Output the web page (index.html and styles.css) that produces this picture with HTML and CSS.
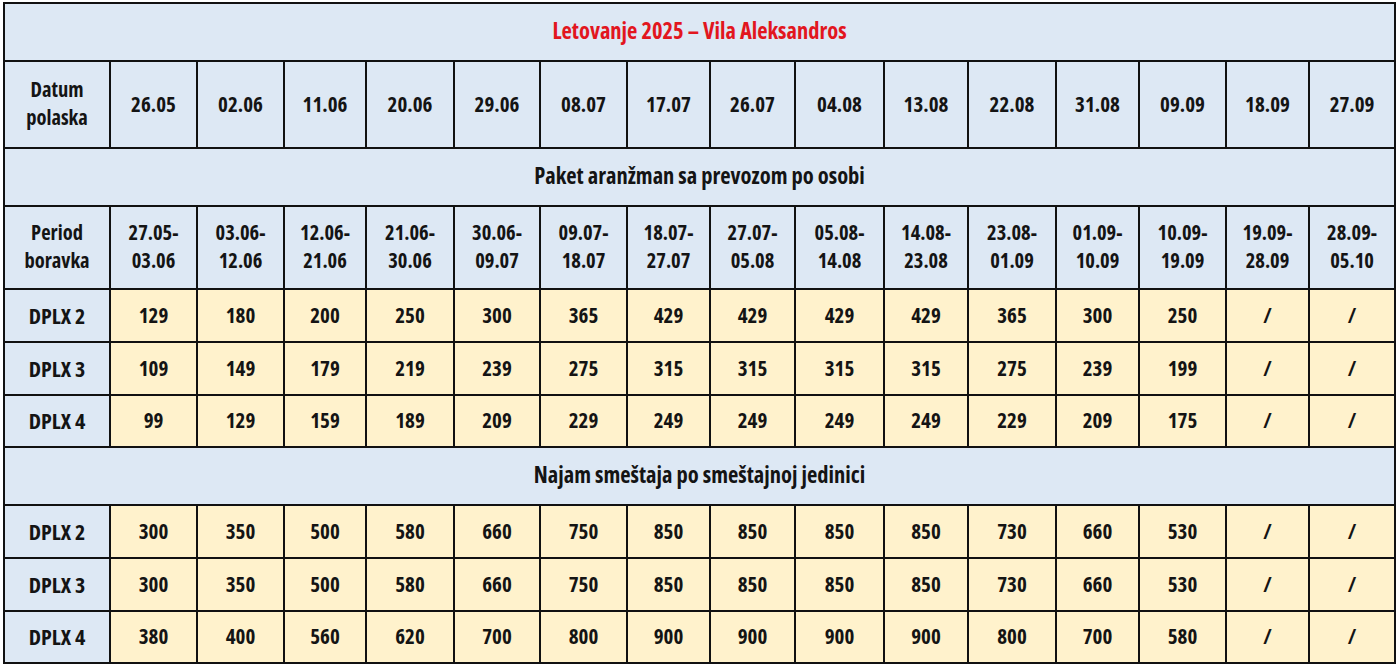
FILE: index.html
```html
<!DOCTYPE html>
<html lang="sr">
<head>
<meta charset="utf-8">
<title>Letovanje 2025 – Vila Aleksandros</title>
<link rel="stylesheet" href="styles.css">
</head>
<body>
<table class="price-table">
  <colgroup>
    <col class="c-label">
    <col class="c87"><col class="c87"><col class="c82"><col class="c88"><col class="c86"><col class="c87"><col class="c83"><col class="c85"><col class="c89"><col class="c84"><col class="c88"><col class="c83"><col class="c87"><col class="c83"><col class="c86">
  </colgroup>
  <tbody>
    <tr class="r-title"><td colspan="16" class="title">Letovanje 2025 – Vila Aleksandros</td></tr>
    <tr class="r-head">
      <td class="lbl two">Datum<br>polaska</td>
      <td>26.05</td><td>02.06</td><td>11.06</td><td>20.06</td><td>29.06</td><td>08.07</td><td>17.07</td><td>26.07</td><td>04.08</td><td>13.08</td><td>22.08</td><td>31.08</td><td>09.09</td><td>18.09</td><td>27.09</td>
    </tr>
    <tr class="r-section"><td colspan="16" class="section">Paket aranžman sa prevozom po osobi</td></tr>
    <tr class="r-period">
      <td class="lbl two">Period<br>boravka</td>
      <td class="two">27.05-<br>03.06</td><td class="two">03.06-<br>12.06</td><td class="two">12.06-<br>21.06</td><td class="two">21.06-<br>30.06</td><td class="two">30.06-<br>09.07</td><td class="two">09.07-<br>18.07</td><td class="two">18.07-<br>27.07</td><td class="two">27.07-<br>05.08</td><td class="two">05.08-<br>14.08</td><td class="two">14.08-<br>23.08</td><td class="two">23.08-<br>01.09</td><td class="two">01.09-<br>10.09</td><td class="two">10.09-<br>19.09</td><td class="two">19.09-<br>28.09</td><td class="two">28.09-<br>05.10</td>
    </tr>
    <tr class="r-data price">
      <td class="lbl">DPLX 2</td>
      <td>129</td><td>180</td><td>200</td><td>250</td><td>300</td><td>365</td><td>429</td><td>429</td><td>429</td><td>429</td><td>365</td><td>300</td><td>250</td><td>/</td><td>/</td>
    </tr>
    <tr class="r-data price">
      <td class="lbl">DPLX 3</td>
      <td>109</td><td>149</td><td>179</td><td>219</td><td>239</td><td>275</td><td>315</td><td>315</td><td>315</td><td>315</td><td>275</td><td>239</td><td>199</td><td>/</td><td>/</td>
    </tr>
    <tr class="r-data3 price">
      <td class="lbl">DPLX 4</td>
      <td>99</td><td>129</td><td>159</td><td>189</td><td>209</td><td>229</td><td>249</td><td>249</td><td>249</td><td>249</td><td>229</td><td>209</td><td>175</td><td>/</td><td>/</td>
    </tr>
    <tr class="r-section"><td colspan="16" class="section">Najam smeštaja po smeštajnoj jedinici</td></tr>
    <tr class="r-data price">
      <td class="lbl">DPLX 2</td>
      <td>300</td><td>350</td><td>500</td><td>580</td><td>660</td><td>750</td><td>850</td><td>850</td><td>850</td><td>850</td><td>730</td><td>660</td><td>530</td><td>/</td><td>/</td>
    </tr>
    <tr class="r-data price">
      <td class="lbl">DPLX 3</td>
      <td>300</td><td>350</td><td>500</td><td>580</td><td>660</td><td>750</td><td>850</td><td>850</td><td>850</td><td>850</td><td>730</td><td>660</td><td>530</td><td>/</td><td>/</td>
    </tr>
    <tr class="r-data3 price">
      <td class="lbl">DPLX 4</td>
      <td>380</td><td>400</td><td>560</td><td>620</td><td>700</td><td>800</td><td>900</td><td>900</td><td>900</td><td>900</td><td>800</td><td>700</td><td>580</td><td>/</td><td>/</td>
    </tr>
  </tbody>
</table>
</body>
</html>
```
FILE: styles.css
```css
html, body {
  margin: 0;
  padding: 0;
  background: #ffffff;
}

.price-table {
  margin: 2px 0 0 3px;
  width: 1392px;
  table-layout: fixed;
  border-collapse: collapse;
  font-family: "Open Sans", "Roboto Condensed", "DejaVu Sans Condensed", sans-serif;
  font-stretch: 75%;
  font-weight: 700;
  font-size: 21px;
  line-height: 28px;
  color: #141414;
  background: #dde8f4;
}

.c-label { width: 106px; }
.c82 { width: 82px; }
.c83 { width: 83px; }
.c84 { width: 84px; }
.c85 { width: 85px; }
.c86 { width: 86px; }
.c87 { width: 87px; }
.c88 { width: 88px; }
.c89 { width: 89px; }

.price-table td {
  border: 2px solid #111111;
  text-align: center;
  vertical-align: middle;
  padding: 0 0 2px 0;
}

.lbl {
  font-size: 22px;
}

.price-table td.two {
  font-size: 20.5px;
  line-height: 28px;
  padding-bottom: 3px;
}

.title {
  color: #e2161e;
  font-size: 22.5px;
}

.section {
  font-size: 22.5px;
}

.r-title { height: 58px; }
.r-head { height: 87px; }
.r-section { height: 58px; }
.r-period { height: 83px; }
.r-data { height: 53px; }
.r-data3 { height: 52px; }

.price td {
  background: #fff2cc;
}

.price td.lbl,
.lbl {
  background: #dde8f4;
}
```
